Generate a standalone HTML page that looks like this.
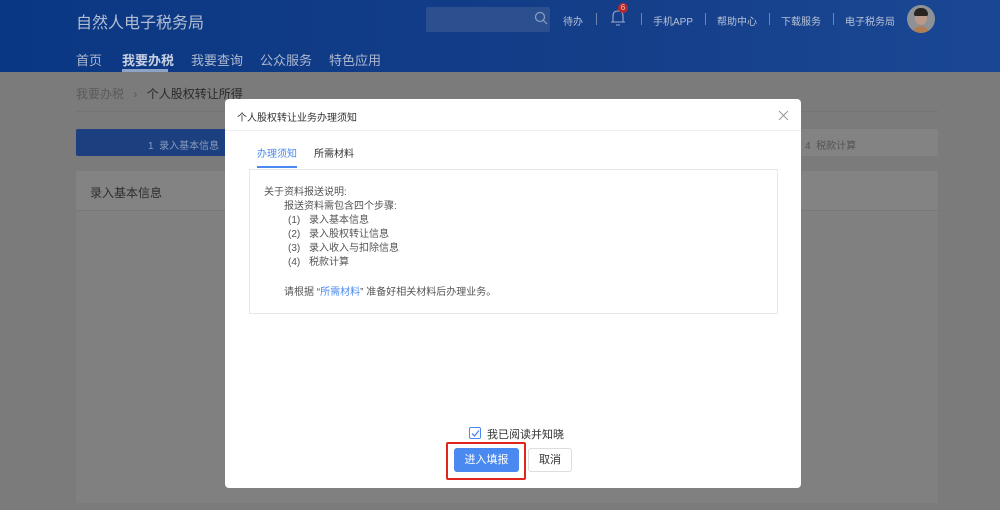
<!DOCTYPE html>
<html><head><meta charset="utf-8"><style>
*{margin:0;padding:0;box-sizing:border-box}
body{width:1000px;height:510px;overflow:hidden;position:relative;font-family:"Liberation Sans","Noto Sans CJK SC",sans-serif;background:#7b7b7b;font-size:12px}
.a{position:absolute;white-space:nowrap}
.hd{position:absolute;left:0;top:0;width:1000px;height:72px;background:linear-gradient(90deg,#0a3783,#153e89 60%,#1a4794)}
.w{color:#b8c2d6;font-size:10px;top:13px}
.sep{position:absolute;width:1px;height:12px;background:#6f84ad;top:13px}
.nav{top:50px;font-size:13px;color:#aeb9cf}
.modal{position:absolute;left:225px;top:99px;width:576px;height:389px;background:#fff;border-radius:4px}
.box{position:absolute;left:24px;top:70px;width:529px;height:145px;border:1px solid #e8e8e8}
.box div{position:absolute;white-space:nowrap;font-size:10px;color:#555;line-height:14px}
.n{display:inline-block;width:21px}
</style></head><body>
<div class="hd"></div>
<div class="a" style="left:76px;top:9px;font-size:16px;color:#b3bdd2">自然人电子税务局</div>
<div class="a" style="left:426px;top:7px;width:124px;height:25px;background:#2c4f90;border-radius:2px"></div>
<svg class="a" style="left:534px;top:11px" width="14" height="14"><circle cx="6" cy="6" r="4.5" stroke="#8aa0c5" fill="none" stroke-width="1.2"/><line x1="9.5" y1="9.5" x2="13" y2="13" stroke="#8aa0c5" stroke-width="1.2"/></svg>
<div class="a w" style="left:563px">待办</div>
<div class="sep" style="left:596px"></div>
<svg class="a" style="left:610px;top:7px" width="16" height="20"><path d="M3 15 L3 9 Q3 4 8 4 Q13 4 13 9 L13 15 M1 15 L15 15 M6 18 L10 18" stroke="#9aaacc" fill="none" stroke-width="1.1"/></svg>
<div class="a" style="left:618px;top:3px;width:10px;height:10px;border-radius:50%;background:#b52a2a;color:#f0c0c0;font-size:8px;text-align:center;line-height:10px">6</div>
<div class="sep" style="left:641px"></div>
<div class="a w" style="left:653px">手机APP</div>
<div class="sep" style="left:705px"></div>
<div class="a w" style="left:717px">帮助中心</div>
<div class="sep" style="left:769px"></div>
<div class="a w" style="left:781px">下载服务</div>
<div class="sep" style="left:833px"></div>
<div class="a w" style="left:845px">电子税务局</div>
<div class="a" style="left:907px;top:5px;width:28px;height:28px;border-radius:50%;background:#8e9297;overflow:hidden">
 <div style="position:absolute;left:8px;top:6px;width:12px;height:14px;border-radius:50%;background:#b99a88"></div>
 <div style="position:absolute;left:7px;top:3px;width:14px;height:8px;border-radius:7px 7px 2px 2px;background:#2a2420"></div>
 <div style="position:absolute;left:5px;top:21px;width:18px;height:10px;border-radius:9px 9px 0 0;background:#b07e55"></div>
</div>
<div class="a nav" style="left:76px">首页</div>
<div class="a nav" style="left:122px;font-weight:bold;color:#c6cfe0">我要办税</div>
<div class="a" style="left:122px;top:69px;width:46px;height:3px;background:#8ea3c8"></div>
<div class="a nav" style="left:191px">我要查询</div>
<div class="a nav" style="left:260px">公众服务</div>
<div class="a nav" style="left:329px">特色应用</div>

<div class="a" style="left:76px;top:85px;font-size:12px;color:#5a5a5a">我要办税 <span style="margin:0 6px">›</span> <span style="color:#2a2a2a">个人股权转让所得</span></div>
<div class="a" style="left:76px;top:111px;width:862px;height:1px;background:#747474"></div>
<div class="a" style="left:76px;top:129px;width:862px;height:27px;background:#838383;border-radius:2px"></div>
<div class="a" style="left:76px;top:129px;width:160px;height:27px;background:#1c3f7f;border-radius:2px 0 0 2px"></div>
<div class="a" style="left:148px;top:137px;font-size:10px;color:#8a9bbd">1&nbsp;&nbsp;录入基本信息</div>
<div class="a" style="left:805px;top:137px;font-size:10px;color:#555">4&nbsp;&nbsp;税款计算</div>
<div class="a" style="left:76px;top:171px;width:862px;height:332px;background:#808080"></div>
<div class="a" style="left:76px;top:171px;width:862px;height:40px;background:#838383;border-bottom:1px solid #787878"></div>
<div class="a" style="left:90px;top:184px;font-size:12px;color:#2e2e2e">录入基本信息</div>

<div class="modal">
 <div class="a" style="left:12px;top:10px;font-size:10px;color:#333">个人股权转让业务办理须知</div>
 <svg class="a" style="left:553px;top:11px" width="11" height="11"><path d="M1 1 L10 10 M10 1 L1 10" stroke="#999" stroke-width="1"/></svg>
 <div class="a" style="left:0;top:31px;width:576px;height:1px;background:#eee"></div>
 <div class="a" style="left:32px;top:46px;font-size:10px;color:#4a8af0">办理须知</div>
 <div class="a" style="left:32px;top:67px;width:40px;height:2px;background:#4a8af0"></div>
 <div class="a" style="left:89px;top:46px;font-size:10px;color:#333">所需材料</div>
 <div class="box">
  <div style="left:14px;top:16px">关于资料报送说明:</div>
  <div style="left:34px;top:30px">报送资料需包含四个步骤:</div>
  <div style="left:38px;top:44px"><span class="n">(1)</span>录入基本信息</div>
  <div style="left:38px;top:58px"><span class="n">(2)</span>录入股权转让信息</div>
  <div style="left:38px;top:72px"><span class="n">(3)</span>录入收入与扣除信息</div>
  <div style="left:38px;top:86px"><span class="n">(4)</span>税款计算</div>
  <div style="left:34px;top:116px">请根据 “<span style="color:#4a8af0">所需材料</span>” 准备好相关材料后办理业务。</div>
 </div>
 <div class="a" style="left:244px;top:328px;width:12px;height:12px;border:1px solid #4a8af0;border-radius:2px"></div>
 <svg class="a" style="left:246px;top:330px" width="9" height="9"><path d="M1 4.5 L3.5 7 L8 1.5" stroke="#4a8af0" fill="none" stroke-width="1.3"/></svg>
 <div class="a" style="left:262px;top:327px;font-size:11px;color:#333">我已阅读并知晓</div>
 <div class="a" style="left:221px;top:343px;width:80px;height:38px;border:2px solid #e0251f;border-radius:2px"></div>
 <div class="a" style="left:229px;top:349px;width:65px;height:24px;background:#4a8af0;border-radius:3px;color:#fff;font-size:11px;text-align:center;line-height:24px">进入填报</div>
 <div class="a" style="left:303px;top:349px;width:44px;height:24px;border:1px solid #ddd;border-radius:3px;color:#333;font-size:11px;text-align:center;line-height:22px">取消</div>
</div>
</body></html>
